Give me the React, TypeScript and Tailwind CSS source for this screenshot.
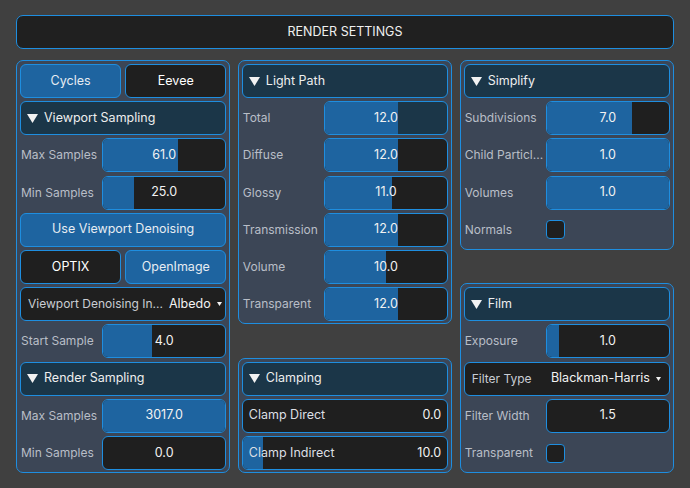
import React from 'react';

type SliderProps = {
  value: number;
  max: number;
  track?: 'dark' | 'teal';
};

const Slider: React.FC<SliderProps> = ({ value, max, track = 'dark' }) => {
  const pct = max > 0 ? Math.min(100, (value / max) * 100) : 0;
  return (
    <div
      className={`relative flex-1 h-full rounded-[6px] border border-[#1e8ee0] overflow-hidden ${
        track === 'teal' ? 'bg-[#1b3648]' : 'bg-[#1f1f1f]'
      }`}
    >
      <div className="absolute inset-y-0 left-0 bg-[#1e64a0]" style={{ width: `${pct}%` }} />
      <div className="relative h-full flex items-center justify-center text-[12.5px] text-[#f2f2f2]">
        {value.toFixed(1)}
      </div>
    </div>
  );
};

const Row: React.FC<{ label: string; children: React.ReactNode }> = ({ label, children }) => (
  <div className="flex items-center h-[34px]">
    <div className="w-[82px] pl-[1px] text-[12px] text-[#b9bec7] whitespace-nowrap overflow-hidden">{label}</div>
    {children}
  </div>
);

const SliderRow: React.FC<{ label: string } & SliderProps> = ({ label, ...rest }) => (
  <Row label={label}>
    <Slider {...rest} />
  </Row>
);

const Header: React.FC<{ title: string }> = ({ title }) => (
  <div className="flex items-center gap-[6px] h-[34px] px-[6px] rounded-[6px] border border-[#1e8ee0] bg-[#1b3648] text-[12.5px] text-[#eeeeee]">
    <svg width="11" height="9" viewBox="0 0 11 9" className="shrink-0">
      <path d="M0 0 H11 L5.5 9 Z" fill="#f2f2f2" />
    </svg>
    <span>{title}</span>
  </div>
);

const Button: React.FC<{ label: string; active?: boolean; className?: string }> = ({ label, active, className }) => (
  <div
    className={`flex-1 flex items-center justify-center h-[34px] rounded-[6px] border border-[#1e8ee0] text-[12.5px] ${
      active ? 'bg-[#1e64a0] text-[#e6ecf2]' : 'bg-[#1f1f1f] text-white'
    } ${className ?? ''}`}
  >
    {label}
  </div>
);

const Select: React.FC<{ label: string; value: string }> = ({ label, value }) => (
  <div className="flex items-center h-[34px] pl-[7px] pr-[8px] rounded-[6px] border border-[#1e8ee0] bg-[#1f1f1f]">
    <span className="flex-1 text-[12px] text-[#c9cdd3] whitespace-nowrap">{label}</span>
    <span className="ml-[6px] text-[12.5px] text-[#f2f2f2] whitespace-nowrap">{value}</span>
    <svg width="5" height="4" viewBox="0 0 5 4" className="ml-[6px] shrink-0">
      <path d="M0 0 H5 L2.5 4 Z" fill="#f2f2f2" />
    </svg>
  </div>
);

const Checkbox: React.FC = () => (
  <div className="w-[19px] h-[19px] rounded-[4px] border border-[#1e8ee0] bg-[#1f1f1f]" />
);

// full-width slider with label inside on the left and value on the right
const InlineSlider: React.FC<{ label: string; value: number; max: number }> = ({ label, value, max }) => (
  <div className="relative h-[34px] rounded-[6px] border border-[#1e8ee0] bg-[#1f1f1f] overflow-hidden">
    <div className="absolute inset-y-0 left-0 bg-[#1e64a0]" style={{ width: `${(value / max) * 100}%` }} />
    <div className="relative h-full flex items-center justify-between px-[6px] text-[12.5px]">
      <span className="text-[#dcdfe4]">{label}</span>
      <span className="text-[#f2f2f2]">{value.toFixed(1)}</span>
    </div>
  </div>
);

const Panel: React.FC<{ children: React.ReactNode }> = ({ children }) => (
  <div className="flex flex-col gap-[3.2px] px-[3px] pt-[3px] pb-[2px] rounded-[7px] border border-[#1e8ee0] bg-[#3c4656]">
    {children}
  </div>
);

export default function App() {
  return (
    <div
      className="w-[690px] h-[488px] bg-[#404040] px-[16px] pt-[15px] flex flex-col gap-[11px]"
      style={{ fontFamily: 'Inter, "Noto Sans", sans-serif' }}
    >
      <div className="h-[34px] rounded-[7px] border border-[#1e8ee0] bg-[#202020] flex items-center justify-center text-[12.5px] text-[#f0f0f0]">
        RENDER SETTINGS
      </div>

      <div className="grid grid-cols-3 gap-[7.5px]">
        {/* Sampling */}
        <div className="h-[413px]">
          <Panel>
            <div className="flex gap-[4px]">
              <Button label="Cycles" active />
              <Button label="Eevee" />
            </div>
            <Header title="Viewport Sampling" />
            <SliderRow label="Max Samples" value={61} max={100} />
            <SliderRow label="Min Samples" value={25} max={100} />
            <Button label="Use Viewport Denoising" active className="flex-none" />
            <div className="flex gap-[4px]">
              <Button label="OPTIX" />
              <Button label="OpenImage" active />
            </div>
            <Select label="Viewport Denoising In..." value="Albedo" />
            <SliderRow label="Start Sample" value={4} max={10} />
            <Header title="Render Sampling" />
            <SliderRow label="Max Samples" value={3017} max={100} />
            <SliderRow label="Min Samples" value={0} max={100} />
          </Panel>
        </div>

        {/* Light paths */}
        <div className="h-[413px] flex flex-col justify-between">
          <Panel>
            <Header title="Light Path" />
            <SliderRow label="Total" value={12} max={20} track="teal" />
            <SliderRow label="Diffuse" value={12} max={20} />
            <SliderRow label="Glossy" value={11} max={20} />
            <SliderRow label="Transmission" value={12} max={20} />
            <SliderRow label="Volume" value={10} max={20} />
            <SliderRow label="Transparent" value={12} max={20} />
          </Panel>
          <Panel>
            <Header title="Clamping" />
            <InlineSlider label="Clamp Direct" value={0} max={100} />
            <InlineSlider label="Clamp Indirect" value={10} max={100} />
          </Panel>
        </div>

        {/* Simplify / Film */}
        <div className="h-[413px] flex flex-col justify-between">
          <Panel>
            <Header title="Simplify" />
            <SliderRow label="Subdivisions" value={7} max={10} />
            <SliderRow label="Child Particl..." value={1} max={1} />
            <SliderRow label="Volumes" value={1} max={1} />
            <Row label="Normals">
              <Checkbox />
            </Row>
          </Panel>
          <Panel>
            <Header title="Film" />
            <SliderRow label="Exposure" value={1} max={10} />
            <Select label="Filter Type" value="Blackman-Harris" />
            <SliderRow label="Filter Width" value={1.5} max={0} />
            <Row label="Transparent">
              <Checkbox />
            </Row>
          </Panel>
        </div>
      </div>
    </div>
  );
}
